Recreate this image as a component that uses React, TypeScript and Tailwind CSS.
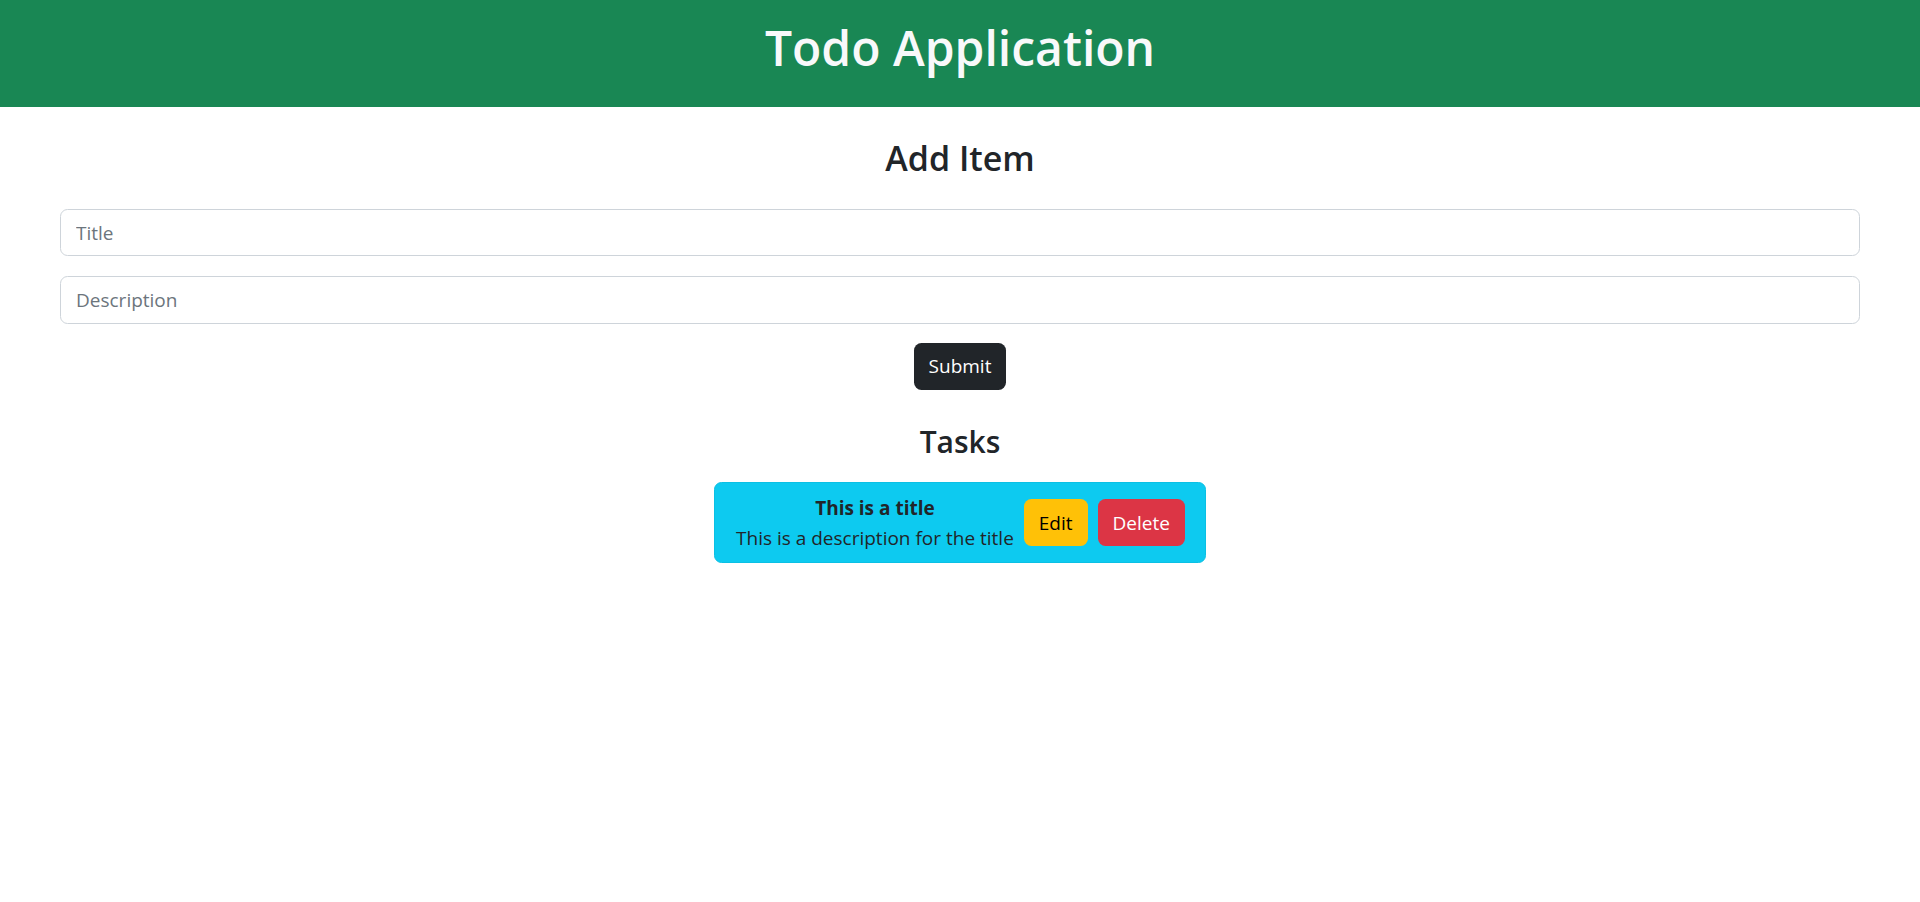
export default function App() {
  return (
    <div className="min-h-screen bg-white font-['Open_Sans',sans-serif] text-[#212529]">
      {/* Navbar / header */}
      <header className="h-[107px] bg-[#198754] flex items-center justify-center pb-[11px]">
        <h1 className="text-[48px] leading-[1.2] font-semibold text-[#f8f9fa]">Todo Application</h1>
      </header>

      <main className="mx-[60px]">
        <h3 className="mt-[31px] text-center text-[34px] leading-[1.2] font-semibold">Add Item</h3>

        <form className="mt-[30px] flex flex-col" onSubmit={(e) => e.preventDefault()}>
          <input
            type="text"
            placeholder="Title"
            className="h-[47.5px] w-full rounded-[7.5px] border border-[#ced4da] bg-white px-[15px] text-[19px] outline-none placeholder:text-[#6c757d]"
          />
          <input
            type="text"
            placeholder="Description"
            className="mt-[20px] h-[47.5px] w-full rounded-[7.5px] border border-[#ced4da] bg-white px-[15px] text-[19px] outline-none placeholder:text-[#6c757d]"
          />
          <button
            type="submit"
            className="mt-[19px] self-center h-[47.5px] rounded-[7.5px] bg-[#212529] px-[15px] text-[19px] leading-[1.5] text-white"
          >
            Submit
          </button>
        </form>

        <h4 className="mt-[34px] text-center text-[30px] leading-[1.2] font-semibold">Tasks</h4>

        <div className="mt-[22px] flex justify-center">
          <div className="flex items-center rounded-[7.5px] border border-[#0bc0e4] bg-[#0dcaf0] py-[9.5px] pl-[21px] pr-[20px]">
            <div className="text-center text-[19px] leading-[30px]">
              <div className="font-bold">This is a title</div>
              <div>This is a description for the title</div>
            </div>
            <button className="ml-[10px] h-[47px] rounded-[7.5px] bg-[#ffc107] px-[15px] text-[19px] text-black">
              Edit
            </button>
            <button className="ml-[10px] h-[47px] rounded-[7.5px] bg-[#dc3545] px-[15px] text-[19px] text-white">
              Delete
            </button>
          </div>
        </div>
      </main>
    </div>
  );
}
